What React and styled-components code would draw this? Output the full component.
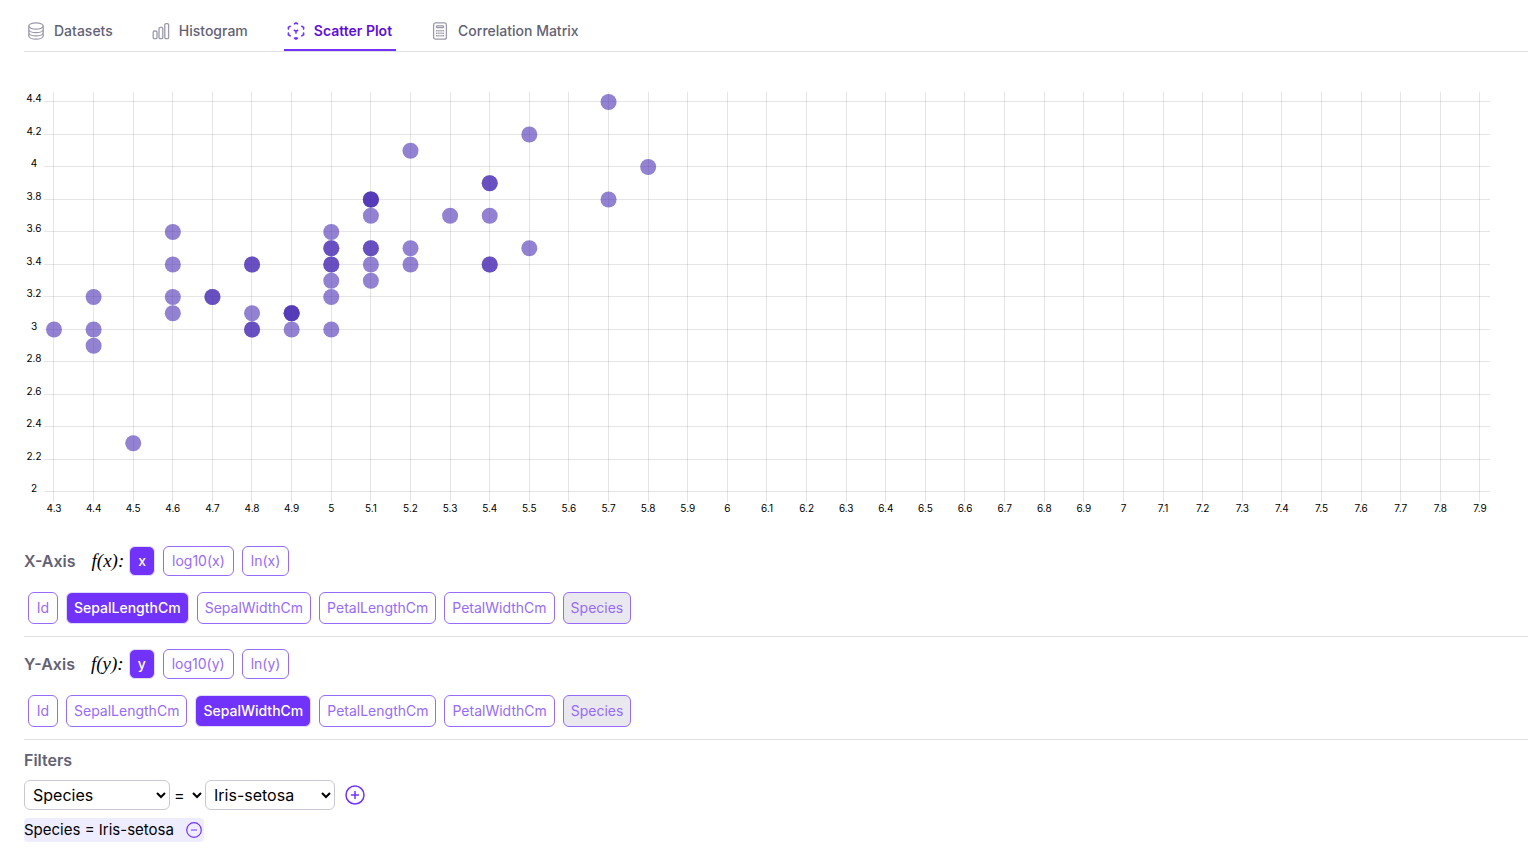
import React, { useLayoutEffect, useRef, useState } from "react";
import styled, { createGlobalStyle, css } from "styled-components";

const GlobalStyle = createGlobalStyle`
  *, *::before, *::after { box-sizing: border-box; }
  body {
    margin: 0;
    background: #fff;
    color: #000;
    font-family: Inter, "Liberation Sans", sans-serif;
    font-size: 16px;
    line-height: 24px;
  }
  button, select { font: inherit; color: inherit; }
`;

const Page = styled.div`
  padding: 11px 6px 20px 24px;
`;

const TabBar = styled.nav`
  display: flex;
  gap: 32px;
  border-bottom: 1px solid #e0e0e0;
`;

const Tab = styled.button`
  display: flex;
  align-items: center;
  gap: 9px;
  height: 40px;
  padding: 2px 4px 0 3px;
  border: 0;
  border-bottom: 2px solid ${(p) => (p.$active ? "#7132fa" : "transparent")};
  background: none;
  color: ${(p) => (p.$active ? "#5f0fd8" : "#626274")};
  font-size: 14px;
  font-weight: ${(p) => (p.$active ? 600 : 500)};
  line-height: 20px;
  cursor: pointer;

  svg {
    flex: none;
    color: ${(p) => (p.$active ? "#7132fa" : "#9a9aac")};
  }
`;

const ChartArea = styled.div`
  height: 471px;
  margin-top: 11px;
`;

const ChartSvg = styled.svg`
  display: block;
  width: 100%;
  height: 468px;
  font-size: 10px;

  line { stroke: #000; stroke-opacity: 0.1; }
  circle { fill: #4b2fb4; fill-opacity: 0.6; }
  text { text-anchor: middle; fill: #000; }
`;

const AxisSection = styled.section`
  padding: 12px 0;
  border-bottom: 1px solid #e0e0e0;
`;

const FilterSection = styled.section`
  padding-top: 8px;
`;

const TransformRow = styled.div`
  display: flex;
  align-items: center;
  height: 30px;
`;

const Heading = styled.h2`
  margin: 0;
  color: #626274;
  font-size: 16px;
  font-weight: 600;
  line-height: 24px;
`;

const FunctionLabel = styled.span`
  margin: 0 5px 0 16px;
  font-family: "Liberation Serif", serif;
  font-size: 19px;
  font-style: italic;
`;

const ChipRow = styled.div`
  display: flex;
  gap: 8px;
`;

const FieldRow = styled(ChipRow)`
  margin: 16px 0 0 4px;
`;

const Chip = styled.button`
  height: ${(p) => (p.$small ? 30 : 32)}px;
  min-width: ${(p) => (p.$small ? 24 : 30)}px;
  padding: 0 ${(p) => (p.$small ? 8 : 7)}px;
  border: 1px solid #976bfa;
  border-radius: 6px;
  background: #fff;
  color: #976bfa;
  font-size: 14px;
  line-height: 20px;
  cursor: pointer;

  ${(p) =>
    p.$active &&
    css`
      border-color: #e2dcfa;
      background: #7132fa;
      color: #fff;
      font-weight: 500;
    `}

  &:disabled {
    background: #e9e8ee;
    cursor: default;
  }
`;

const FilterRow = styled.div`
  display: flex;
  align-items: center;
  margin-top: 8px;
`;

const FilterSelect = styled.select`
  width: ${(p) => p.$width}px;
  height: 30px;
  padding: 0 0 0 4px;
  border: 1px solid #c9c7d6;
  border-radius: 6px;
  background: #fff;
`;

const OperatorSelect = styled.select`
  width: 35px;
  height: 30px;
  padding: 0;
  border: 0;
  background: transparent;
`;

const IconButton = styled.button`
  display: flex;
  padding: 0;
  margin-left: 10px;
  border: 0;
  background: none;
  color: #7132fa;
  cursor: pointer;
`;

const FilterTag = styled.div`
  display: flex;
  align-items: center;
  gap: 2px;
  width: fit-content;
  margin-top: 8px;
  padding-right: 2px;
  border-radius: 4px;
  background: #eeedff;
  font-size: 15px;
`;

const Svg = ({ size = 18, width = 1.2, children }) => (
  <svg
    width={size}
    height={size}
    viewBox={`0 0 ${size} ${size}`}
    fill="none"
    stroke="currentColor"
    strokeWidth={width}
    aria-hidden="true"
  >
    {children}
  </svg>
);

const DatabaseIcon = () => (
  <Svg width={1.3}>
    <ellipse cx="9" cy="4" rx="7.200" ry="3.200" />
    <path d="M1.800 4v10c0 1.800 3.200 3.200 7.200 3.200s7.200-1.400 7.200-3.200V4M1.800 7.400c0 1.800 3.200 3.200 7.200 3.200s7.200-1.400 7.200-3.200M1.800 10.700c0 1.800 3.200 3.200 7.200 3.200s7.200-1.400 7.200-3.200" />
  </Svg>
);

const HistogramIcon = () => (
  <Svg width={1.3}>
    <rect x="1.200" y="9" width="3.800" height="7.600" rx="1.200" />
    <rect x="7" y="5.300" width="3.800" height="11.300" rx="1.200" />
    <rect x="12.800" y="1.600" width="3.800" height="15" rx="1.200" />
  </Svg>
);

const ScatterIcon = () => (
  <Svg width={1.6}>
    <path
      strokeLinecap="round"
      d="M7.500 1.800 9 1l1.500.8M7.500 16.200 9 17l1.500-.8M9 15.500V17M3.200 4.300 1.400 5.400v1.700M14.800 4.300l1.800 1.100v1.700M1.400 11v1.700l1.800 1.200M16.600 11v1.700l-1.800 1.200M7.300 8.300 9 9.300l1.700-1M9 9.300v1.800"
    />
  </Svg>
);

const CalculatorIcon = () => (
  <Svg width={1.3}>
    <rect x="2.600" y=".8" width="12.800" height="16.400" rx="2" />
    <rect x="5.500" y="3.800" width="7" height="1.800" rx=".5" />
    <path d="M5.100 8.800h8M5.100 11.300h8M5.100 13.800h8" strokeWidth="1.500" strokeDasharray="1.500 .6" />
  </Svg>
);

const PlusCircle = () => (
  <Svg size={20} width={1.5}>
    <circle cx="10" cy="10" r="9" />
    <path d="M6.500 10h7M10 6.500v7" strokeLinecap="round" />
  </Svg>
);

const MinusCircle = () => (
  <Svg size={16}>
    <circle cx="8" cy="8" r="7.300" />
    <path d="M5.500 8h5" strokeLinecap="round" />
  </Svg>
);

const TABS = [
  ["Datasets", DatabaseIcon],
  ["Histogram", HistogramIcon],
  ["Scatter Plot", ScatterIcon],
  ["Correlation Matrix", CalculatorIcon],
];

// sepal length, sepal width, number of overlapping samples
const POINTS = [
  [4.3, 3, 1], [4.4, 3.2, 1], [4.4, 3, 1], [4.4, 2.9, 1], [4.5, 2.3, 1],
  [4.6, 3.6, 1], [4.6, 3.4, 1], [4.6, 3.2, 1], [4.6, 3.1, 1], [4.7, 3.2, 2],
  [4.8, 3.4, 2], [4.8, 3.1, 1], [4.8, 3, 2], [4.9, 3.1, 3], [4.9, 3, 1],
  [5, 3.6, 1], [5, 3.5, 2], [5, 3.4, 2], [5, 3.3, 1], [5, 3.2, 1], [5, 3, 1],
  [5.1, 3.8, 3], [5.1, 3.7, 1], [5.1, 3.5, 2], [5.1, 3.4, 1], [5.1, 3.3, 1],
  [5.2, 4.1, 1], [5.2, 3.5, 1], [5.2, 3.4, 1], [5.3, 3.7, 1],
  [5.4, 3.9, 2], [5.4, 3.7, 1], [5.4, 3.4, 2], [5.5, 4.2, 1], [5.5, 3.5, 1],
  [5.7, 4.4, 1], [5.7, 3.8, 1], [5.8, 4, 1],
];

const X_TICKS = Array.from({ length: 37 }, (_, i) => (43 + i) / 10);
const Y_TICKS = Array.from({ length: 13 }, (_, i) => (20 + 2 * i) / 10);
const PLOT = { left: 30, right: 48, top: 39, bottom: 429 };

// centre of the pixel just before a coordinate, so grid lines stay sharp
const snap = (v) => Math.round(v - 0.6) + 0.5;

function ScatterPlot() {
  const ref = useRef(null);
  const [width, setWidth] = useState(1200);
  useLayoutEffect(() => {
    const update = () => setWidth(ref.current.clientWidth);
    update();
    const observer = new ResizeObserver(update);
    observer.observe(ref.current);
    return () => observer.disconnect();
  }, []);

  const x = (v) => PLOT.left + ((v - 4.3) / 3.6) * (width - PLOT.left - PLOT.right);
  const y = (v) => PLOT.bottom - ((v - 2) / 2.4) * (PLOT.bottom - PLOT.top);

  return (
    <ChartArea ref={ref}>
      <ChartSvg role="img" aria-label="Sepal width against sepal length">
        {X_TICKS.map((t) => (
          <g key={t}>
            <line x1={snap(x(t))} x2={snap(x(t))} y1={PLOT.top - 10} y2={PLOT.bottom + 10} />
            <text x={x(t)} y={PLOT.bottom + 20}>{t}</text>
          </g>
        ))}
        {Y_TICKS.map((t) => (
          <g key={t}>
            <line x1={20} x2={width - 38} y1={snap(y(t))} y2={snap(y(t))} />
            <text x={10} y={y(t)}>{t}</text>
          </g>
        ))}
        {POINTS.flatMap(([px, py, count]) =>
          Array.from({ length: count }, (_, i) => (
            <circle key={`${px}-${py}-${i}`} cx={x(px)} cy={y(py)} r="8" />
          ))
        )}
      </ChartSvg>
    </ChartArea>
  );
}

const FIELDS = ["Id", "SepalLengthCm", "SepalWidthCm", "PetalLengthCm", "PetalWidthCm", "Species"];

function AxisControls({ name, initialField }) {
  const [transform, setTransform] = useState(0);
  const [field, setField] = useState(initialField);
  const v = name.toLowerCase();
  return (
    <AxisSection>
      <TransformRow>
        <Heading>{name}-Axis</Heading>
        <FunctionLabel>f({v}):</FunctionLabel>
        <ChipRow>
          {[v, `log10(${v})`, `ln(${v})`].map((label, i) => (
            <Chip key={label} $small $active={i === transform} onClick={() => setTransform(i)}>
              {label}
            </Chip>
          ))}
        </ChipRow>
      </TransformRow>
      <FieldRow>
        {FIELDS.map((label) => (
          <Chip key={label} $active={label === field} disabled={label === "Species"} onClick={() => setField(label)}>
            {label}
          </Chip>
        ))}
      </FieldRow>
    </AxisSection>
  );
}

export default function App() {
  const [tab, setTab] = useState("Scatter Plot");
  return (
    <>
      <GlobalStyle />
      <Page>
        <TabBar>
          {TABS.map(([label, Icon]) => (
            <Tab key={label} $active={label === tab} onClick={() => setTab(label)}>
              <Icon />
              {label}
            </Tab>
          ))}
        </TabBar>
        <main>
          <ScatterPlot />
          <AxisControls name="X" initialField="SepalLengthCm" />
          <AxisControls name="Y" initialField="SepalWidthCm" />
          <FilterSection>
            <Heading>Filters</Heading>
            <FilterRow>
              <FilterSelect $width={146} aria-label="Column" defaultValue="Species">
                {FIELDS.map((f) => <option key={f}>{f}</option>)}
              </FilterSelect>
              <OperatorSelect aria-label="Operator">
                <option>=</option>
              </OperatorSelect>
              <FilterSelect $width={130} aria-label="Value">
                <option>Iris-setosa</option>
                <option>Iris-versicolor</option>
                <option>Iris-virginica</option>
              </FilterSelect>
              <IconButton aria-label="Add filter"><PlusCircle /></IconButton>
            </FilterRow>
            <FilterTag>
              Species = Iris-setosa
              <IconButton aria-label="Remove filter"><MinusCircle /></IconButton>
            </FilterTag>
          </FilterSection>
        </main>
      </Page>
    </>
  );
}
